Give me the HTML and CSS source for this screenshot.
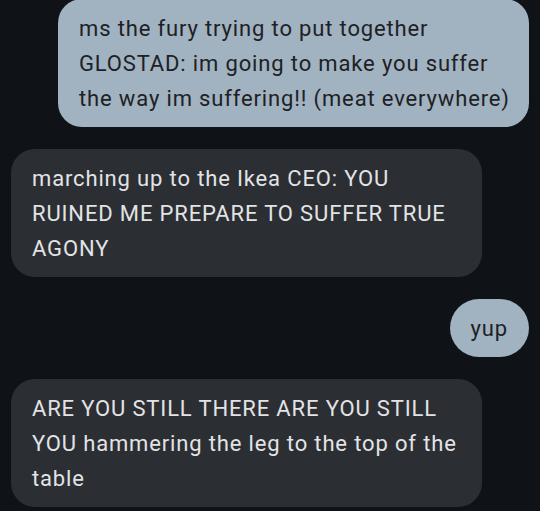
FILE: index.html
```html
<!DOCTYPE html>
<html>
<head>
<meta charset="utf-8">
<link rel="stylesheet" href="styles.css">
</head>
<body>
<div class="thread">
  <div class="msg sent">ms the fury trying to put together<br>GLOSTAD: im going to make you suffer<br>the way im suffering!! (meat everywhere)</div>
  <div class="msg recv">marching up to the Ikea CEO: YOU<br>RUINED ME PREPARE TO SUFFER TRUE<br>AGONY</div>
  <div class="msg sent short">yup</div>
  <div class="msg recv">ARE YOU STILL THERE ARE YOU STILL<br>YOU hammering the leg to the top of the<br>table</div>
</div>
</body>
</html>
```
FILE: styles.css
```css
html, body {
  margin: 0;
  padding: 0;
  background: #0f1317;
  height: 100%;
  overflow: hidden;
}
.thread {
  display: flex;
  flex-direction: column;
  gap: 22px;
  padding: 0 11px;
  margin-top: -1px;
  font-family: Roboto, "Liberation Sans", sans-serif;
  font-size: 22px;
  line-height: 35px;
  letter-spacing: 0.85px;
}
.msg {
  box-sizing: border-box;
  width: 471px;
  padding: 12px 21px 11px 21px;
  border-radius: 24px;
  white-space: nowrap;
}
.sent {
  align-self: flex-end;
  background: #a1b2c0;
  color: #1d2125;
}
.recv {
  align-self: flex-start;
  background: #2b2f33;
  color: #e3e3e6;
}
.short {
  width: auto;
  border-radius: 30px;
}
```
